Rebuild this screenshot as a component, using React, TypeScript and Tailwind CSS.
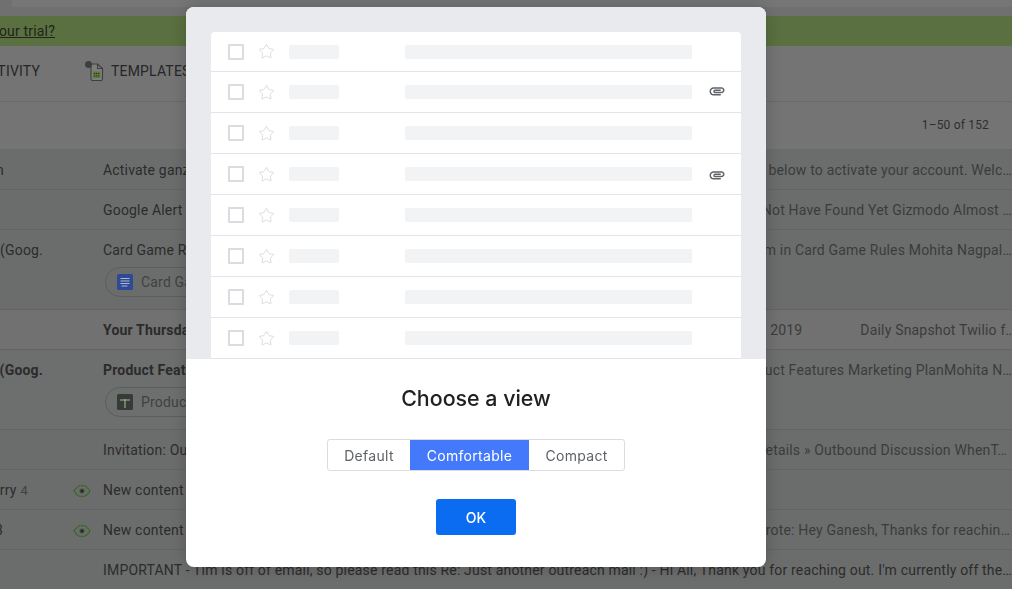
import React from "react";
import { Star } from "lucide-react";
import { MdAttachment } from "react-icons/md";

type R = {
  h: string;
  sender?: string;
  senderClass?: string;
  count?: string;
  eye?: boolean;
  subject: string;
  bold?: boolean;
  right: string;
  rightClass?: string;
  rightExtra?: string;
  pill?: "doc" | "sheet";
  pillText?: string;
  bg: string;
};

const rows: R[] = [
  { h: "h-[40px]", sender: "Ganesh Jain", senderClass: "pr-[68px]", subject: "Activate ganzo account today", right: "Please click the link below to activate your account. Welc…", bg: "bg-[#6b6d6c]" },
  { h: "h-[40px]", subject: "Google Alert - Gizmodo", right: "Things You Might Not Have Found Yet Gizmodo Almost …", bg: "bg-[#6b6d6c]" },
  { h: "h-[80px]", sender: "Mohita Nagpal (Goog.", senderClass: "pr-[29px]", subject: "Card Game Rules", right: "Shared with them in Card Game Rules Mohita Nagpal…", pill: "doc", pillText: "Card Game Rules", bg: "bg-[#6b6d6c]" },
  { h: "h-[40px]", subject: "Your Thursday Snapshot", bold: true, right: "Thu, May 9, 2019", rightExtra: "Daily Snapshot Twilio f…", bg: "bg-[#717171]" },
  { h: "h-[80px]", sender: "Mohita Nagpal (Goog.", senderClass: "pr-[29px] font-bold", subject: "Product Features", bold: true, right: "Shared in Product Features Marketing PlanMohita N…", pill: "sheet", pillText: "Product Features", bg: "bg-[#6d6f6e]" },
  { h: "h-[40px]", subject: "Invitation: Outbound Discussion", right: "More details » Outbound Discussion WhenT…", rightClass: "pr-[5px]", bg: "bg-[#6b6d6c]" },
  { h: "h-[40px]", sender: "Ganesh, Larry", senderClass: "pr-[44px]", count: "4", eye: true, subject: "New content on your blog", right: "", bg: "bg-[#6b6d6c]" },
  { h: "h-[40px]", sender: "Ganesh 3", senderClass: "pr-[69px]", eye: true, subject: "New content on your blog", right: "wrote: Hey Ganesh, Thanks for reachin…", rightClass: "pr-[2px]", bg: "bg-[#6b6d6c]" },
  { h: "h-[40px]", subject: "IMPORTANT - Tim is off of email, so please read this Re: Just another outreach mail :) - Hi All, Thank you for reaching out. I'm currently off the…", right: "", bg: "bg-[#6b6d6c]" },
];

function Eye() {
  return (
    <svg width="18" height="14" viewBox="0 0 18 14" fill="none" className="ml-[1px] shrink-0">
      <path d="M1 7C3.5 3 6 1.5 9 1.5S14.5 3 17 7C14.5 11 12 12.5 9 12.5S3.5 11 1 7Z" stroke="#2f6418" strokeWidth="1.3" strokeDasharray="1.6 .7" />
      <circle cx="9" cy="7" r="2.8" fill="#55604c" />
      <rect x="7.5" y="5.5" width="3" height="3" fill="#23291e" />
    </svg>
  );
}

function DocIcon({ kind }: { kind: "doc" | "sheet" }) {
  if (kind === "doc") {
    return (
      <svg width="16" height="16" viewBox="0 0 16 16" className="shrink-0">
        <rect width="16" height="16" rx="1.5" fill="#2f4a94" />
        <path d="M3.5 4.5h9M3.5 7h9M3.5 9.5h9M4.5 12h6" stroke="#aeb9cf" strokeWidth="1" />
      </svg>
    );
  }
  return (
    <svg width="16" height="16" viewBox="0 0 16 16" className="shrink-0">
      <rect width="16" height="16" rx="1.5" fill="#363b38" />
      <path d="M3 6h10M8 5v9" stroke="#a3b493" strokeWidth="1.1" />
    </svg>
  );
}

function TemplateIcon() {
  return (
    <svg width="19" height="20" viewBox="0 0 19 20" fill="none" className="shrink-0">
      <path d="M6 3H12.5L17.5 7.5V18A1.5 1.5 0 0 1 16 19.5H7.5A1.5 1.5 0 0 1 6 18Z" fill="#7e7e7e" stroke="#3d3f3e" strokeWidth="1.1" />
      <path d="M12.5 3V7.5H17.5" stroke="#3d3f3e" strokeWidth="1.1" />
      <rect x="8" y="10.5" width="7.5" height="6.5" fill="#5c7a38" />
      <path d="M9 12.5h5.5M9 15h5.5" stroke="#262b20" strokeWidth="1" strokeDasharray="1.2 .8" />
      <circle cx="3.5" cy="3.5" r="3.5" fill="#3d3f3e" />
    </svg>
  );
}

function MailRow({ r }: { r: R }) {
  return (
    <div className={`${r.h} ${r.bg} border-b border-[#636564]`}>
      <div className="flex h-[41px] items-center">
        <div className={`flex w-[72px] shrink-0 justify-end whitespace-nowrap text-[#2b2b2b] ${r.senderClass ?? ""}`}>
          <span>
            {r.sender}
            {r.count ? <span className="ml-1 text-[13px] text-[#3f4140]">{r.count}</span> : null}
          </span>
        </div>
        <div className="flex w-[31px] shrink-0 items-center">{r.eye ? <Eye /> : null}</div>
        <div className={`whitespace-nowrap text-[#2b2b2b] ${r.right ? "w-[140px] shrink-0 overflow-hidden" : "min-w-0 flex-1 overflow-hidden"} ${r.bold ? "font-bold text-[#1e1e1e]" : ""}`}>
          {r.subject}
        </div>
        {r.right ? (
          <div className={`flex min-w-0 flex-1 justify-end whitespace-nowrap text-[#3a3c3b] ${r.rightClass ?? ""}`}>
            <span>{r.right}</span>
            {r.rightExtra ? <span className="mr-[-3px] ml-[58px]">{r.rightExtra}</span> : null}
          </div>
        ) : null}
      </div>
      {r.pill ? (
        <div className="mt-[-4px] ml-[105px] flex h-[30px] w-[180px] items-center gap-2 rounded-full border border-[#5c5e5d] pl-[11px] text-[#3f4140]">
          <DocIcon kind={r.pill} />
          <span className="whitespace-nowrap">{r.pillText}</span>
        </div>
      ) : null}
    </div>
  );
}

function SkeletonRow({ clip, first }: { clip?: string; first?: boolean }) {
  return (
    <div className={`flex items-center border-b border-[#e3e4e8] ${first ? "h-[40px]" : "h-[41px]"}`}>
      <div className="ml-[17px] h-4 w-4 rounded-[1px] border-2 border-[#dadce0]" />
      <Star size={17} strokeWidth={1.4} className="ml-[14px] text-[#dadce0]" />
      <div className="ml-[14px] h-[14px] w-[50px] rounded-[2px] bg-[#f1f3f4]" />
      <div className="ml-[66px] h-[14px] w-[287px] rounded-[2px] bg-[#f1f3f4]" />
      {clip ? <MdAttachment size={18} className={`ml-[16px] text-[#5f6368] ${clip}`} /> : null}
    </div>
  );
}

export default function App() {
  return (
    <div className="relative h-[589px] w-[1012px] overflow-hidden bg-[#757575] font-['Roboto',sans-serif] text-[14px] tracking-[0.18px]">
      <div className="h-[16px] bg-[#707070]">
        <div className="ml-[12px] h-[7px] bg-[#767676]" />
      </div>
      <div className="flex h-[30px] items-center bg-[#5a7040] text-[#1d2418]">
        <div className="flex w-[55px] justify-end whitespace-nowrap underline">your trial?</div>
      </div>
      <div className="flex h-[56px] items-center border-b border-[#6a6a6a] bg-[#747474] pb-[5px] text-[#262626]">
        <div className="flex w-[40px] justify-end whitespace-nowrap">ACTIVITY</div>
        <div className="ml-[45px] shrink-0">
          <TemplateIcon />
        </div>
        <span className="ml-[7px] whitespace-nowrap">TEMPLATES</span>
      </div>
      <div className="flex h-[48px] items-center justify-end border-b border-[#6a6a6a] bg-[#747474] pr-[23px] pb-[1px] text-[12px] text-[#2e2e2e]">
        1–50 of 152
      </div>
      {rows.map((r, i) => (
        <MailRow key={i} r={r} />
      ))}

      <div className="fixed inset-0 flex items-start justify-center pt-[7px] pr-[60px]">
        <div className="h-[560px] w-[580px] overflow-hidden rounded-[8px] bg-white shadow-[0_0_16px_rgba(0,0,0,0.2)]">
          <div className="h-[352px] overflow-hidden bg-[#e8eaed] px-[25px] pt-[25px]">
            <div className="rounded-t-[4px] bg-white">
              <SkeletonRow first />
              <SkeletonRow clip="-mt-[2px]" />
              <SkeletonRow />
              <SkeletonRow clip="mt-[2px]" />
              <SkeletonRow />
              <SkeletonRow />
              <SkeletonRow />
              <SkeletonRow />
            </div>
          </div>
          <div className="flex flex-col items-center font-['Inter',sans-serif]">
            <h2 className="mt-[24px] text-[21.4px] leading-[30px] font-medium tracking-normal text-[#202124]">Choose a view</h2>
            <div className="mt-[26px] flex h-[32px] rounded-[3px] border border-[#dadce0] text-[14px] tracking-[0.3px] text-[#5f6368]">
              <div className="flex w-[82px] items-center justify-center">Default</div>
              <div className="flex w-[119px] items-center justify-center bg-[#4479fb] text-white">Comfortable</div>
              <div className="flex w-[95px] items-center justify-center">Compact</div>
            </div>
            <button className="mt-[28px] h-[36px] w-[80px] rounded-[3px] bg-[#0b6cf2] text-[14px] font-medium text-white">OK</button>
          </div>
        </div>
      </div>
    </div>
  );
}
